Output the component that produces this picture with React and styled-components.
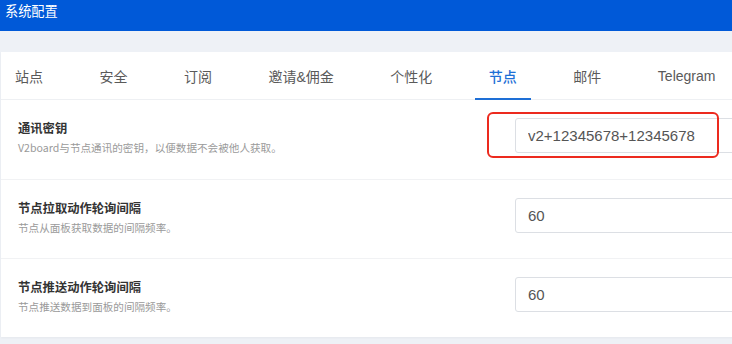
import React from "react";
import styled, { createGlobalStyle } from "styled-components";

const Global = createGlobalStyle`
  html, body { margin: 0; padding: 0; background: #eef1f6; }
  body { font-family: "Liberation Sans", "Noto Sans CJK SC", sans-serif; }
  * { box-sizing: border-box; }
`;

const Page = styled.div`
  width: 732px;
  height: 344px;
  overflow: hidden;
  background: #eef1f6;
`;

const Header = styled.header`
  height: 31px;
  background: #0059d8;
  color: #fff;
  font-size: 13.2px;
  line-height: 21px;
  padding-left: 5px;
  font-family: "Noto Sans CJK SC", sans-serif;
`;

const Card = styled.section`
  margin: 21px -30px 0 1px;
  background: #fff;
  box-shadow: 0 1px 2px rgba(0, 0, 0, 0.04);
`;

const TabList = styled.nav`
  display: flex;
  gap: 28.5px;
  height: 48px;
  border-bottom: 1px solid #eef0f3;
`;

const Tab = styled.div`
  position: relative;
  padding: 0 14px;
  display: flex;
  align-items: center;
  font-size: 14px;
  color: ${(p) => (p.$active ? "#1e6fd6" : "#5a5a5a")};
  font-weight: ${(p) => (p.$active ? 500 : 400)};
  white-space: nowrap;
  &::after {
    content: "";
    position: absolute;
    left: 0;
    right: 0;
    bottom: -1px;
    height: 2px;
    background: ${(p) => (p.$active ? "#1e6fd6" : "transparent")};
  }
`;

const Row = styled.div`
  display: grid;
  grid-template-columns: 513px 1fr;
  height: 79px;
  padding: 18px 0 0 17px;
  border-top: ${(p) => (p.$first ? "none" : "1px solid #f1f2f4")};
`;

const Label = styled.div`
  display: flex;
  flex-direction: column;
`;

const Title = styled.div`
  font-family: "Noto Sans CJK SC", sans-serif;
  font-size: 12.3px;
  line-height: 20px;
  font-weight: 600;
  color: #333;
`;

const Desc = styled.div`
  font-family: "Noto Sans CJK SC", sans-serif;
  font-size: 10.6px;
  line-height: 20px;
  color: #9a9a9a;
`;

const Field = styled.div`
  position: relative;
  margin-left: -16px;
  width: 260px;
  height: 35px;
`;

const Input = styled.input`
  width: 100%;
  height: 35px;
  border: 1px solid #dcdfe4;
  border-radius: 3px;
  padding: 0 12px;
  font-family: "Liberation Sans", sans-serif;
  font-size: 15px;
  color: #555;
  background: #fff;
  outline: none;
`;

const Highlight = styled.div`
  position: absolute;
  left: -28px;
  top: -6px;
  width: 232px;
  height: 46px;
  border: 2px solid #ec2a1e;
  border-radius: 6px;
  pointer-events: none;
`;

const tabs = ["站点", "安全", "订阅", "邀请&佣金", "个性化", "节点", "邮件", "Telegram"];

const rows = [
  {
    title: "通讯密钥",
    desc: "V2board与节点通讯的密钥，以便数据不会被他人获取。",
    value: "v2+12345678+12345678",
    mark: true,
  },
  {
    title: "节点拉取动作轮询间隔",
    desc: "节点从面板获取数据的间隔频率。",
    value: "60",
  },
  {
    title: "节点推送动作轮询间隔",
    desc: "节点推送数据到面板的间隔频率。",
    value: "60",
  },
];

export default function App() {
  return (
    <Page>
      <Global />
      <Header>系统配置</Header>
      <Card>
        <TabList>
          {tabs.map((t) => (
            <Tab key={t} $active={t === "节点"}>
              {t}
            </Tab>
          ))}
        </TabList>
        {rows.map((r, i) => (
          <Row key={r.title} $first={i === 0}>
            <Label>
              <Title>{r.title}</Title>
              <Desc>{r.desc}</Desc>
            </Label>
            <Field>
              <Input defaultValue={r.value} readOnly />
              {r.mark && <Highlight />}
            </Field>
          </Row>
        ))}
      </Card>
    </Page>
  );
}
